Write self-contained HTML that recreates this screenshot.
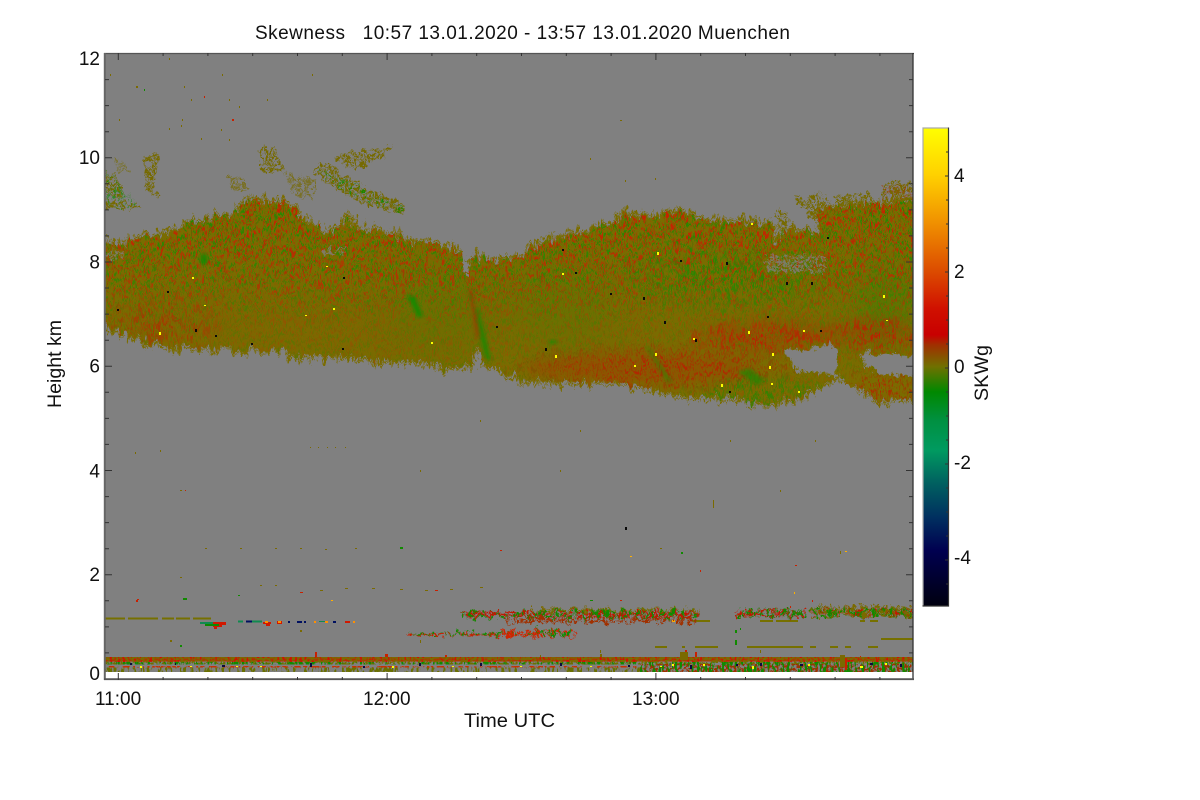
<!DOCTYPE html>
<html><head><meta charset="utf-8"><title>Skewness</title>
<style>html,body{margin:0;padding:0;background:#fff;width:1200px;height:800px;overflow:hidden}svg{display:block}text{font-family:"Liberation Sans",sans-serif;fill:#111;font-size:19px}</style></head>
<body>
<svg width="1200" height="800" viewBox="0 0 1200 800" xmlns="http://www.w3.org/2000/svg">
<defs>
<path id="cp" d="M95,238 L112,243 125,244 132,240 142,236 172,236 178,228 192,222 203,223 217,216 232,214 243,205 250,198 268,202 283,203 292,212 303,220 327,233 338,228 347,218 355,224 377,232 398,236 413,243 430,243 450,248 460,252 463,262 464,275 470,258 478,256 490,262 505,258 520,258 535,245 548,240 565,238 580,232 598,226 615,224 625,214 650,218 683,212 703,220 725,222 750,222 774,225 778,245 785,230 805,232 818,234 820,207 840,205 860,205 885,205 910,200 925,198 925,358 913,358 893,353 873,357 867,350 862,355 862,360 877,372 887,375 925,377 925,400 913,400 893,398 880,403 863,390 843,382 833,363 835,355 832,345 820,348 800,353 782,350 790,360 800,370 830,374 836,378 830,384 820,387 803,397 763,405 740,398 720,398 690,396 645,388 608,383 520,380 500,370 483,366 477,350 470,367 450,370 433,362 377,360 333,355 290,357 287,350 243,350 177,346 150,342 120,332 95,325 Z"/>
<clipPath id="plot"><rect x="105" y="54" width="808" height="618"/></clipPath>
<clipPath id="cloud"><use href="#cp"/></clipPath>
<filter id="jag" filterUnits="userSpaceOnUse" x="0" y="0" width="1200" height="800" color-interpolation-filters="sRGB">
<feTurbulence type="fractalNoise" baseFrequency="0.22 0.05" numOctaves="3" seed="7" result="t"/>
<feDisplacementMap in="SourceGraphic" in2="t" scale="18" xChannelSelector="R" yChannelSelector="G"/>
</filter>
<filter id="jag2" filterUnits="userSpaceOnUse" x="0" y="0" width="1200" height="800" color-interpolation-filters="sRGB">
<feTurbulence type="fractalNoise" baseFrequency="0.18 0.14" numOctaves="3" seed="17" result="t"/>
<feDisplacementMap in="SourceGraphic" in2="t" scale="12" xChannelSelector="R" yChannelSelector="G"/>
</filter>
<filter id="n1" filterUnits="userSpaceOnUse" x="0" y="0" width="1200" height="800" color-interpolation-filters="sRGB">
<feTurbulence type="fractalNoise" baseFrequency="0.5 0.22" numOctaves="2" seed="3"/>
<feColorMatrix values="0 0 0 0 0 0 0 0 0 0 0 0 0 0 0 9 0 0 0 -4.8" result="a"/>
<feComposite in="SourceGraphic" in2="a" operator="in"/>
</filter>
<filter id="n2" filterUnits="userSpaceOnUse" x="0" y="0" width="1200" height="800" color-interpolation-filters="sRGB">
<feTurbulence type="fractalNoise" baseFrequency="0.5 0.18" numOctaves="2" seed="21"/>
<feColorMatrix values="0 0 0 0 0 0 0 0 0 0 0 0 0 0 0 9 0 0 0 -4.9" result="a"/>
<feComposite in="SourceGraphic" in2="a" operator="in"/>
</filter>
<filter id="n3" filterUnits="userSpaceOnUse" x="0" y="0" width="1200" height="800" color-interpolation-filters="sRGB">
<feTurbulence type="fractalNoise" baseFrequency="0.38 0.38" numOctaves="3" seed="11"/>
<feColorMatrix values="0 0 0 0 0 0 0 0 0 0 0 0 0 0 0 14 0 0 0 -6.6" result="a"/>
<feComposite in="SourceGraphic" in2="a" operator="in"/>
</filter>
<filter id="n4" filterUnits="userSpaceOnUse" x="0" y="0" width="1200" height="800" color-interpolation-filters="sRGB">
<feTurbulence type="fractalNoise" baseFrequency="0.4 0.12" numOctaves="2" seed="31"/>
<feColorMatrix values="0 0 0 0 0 0 0 0 0 0 0 0 0 0 0 12 0 0 0 -6.2" result="a"/>
<feComposite in="SourceGraphic" in2="a" operator="in"/>
</filter>
<filter id="n5" filterUnits="userSpaceOnUse" x="0" y="0" width="1200" height="800" color-interpolation-filters="sRGB">
<feTurbulence type="fractalNoise" baseFrequency="0.4 0.3" numOctaves="2" seed="41"/>
<feColorMatrix values="0 0 0 0 0 0 0 0 0 0 0 0 0 0 0 12 0 0 0 -5.2" result="a"/>
<feComposite in="SourceGraphic" in2="a" operator="in"/>
</filter>
<filter id="b6" x="-50%" y="-50%" width="200%" height="200%"><feGaussianBlur stdDeviation="6"/></filter>
<filter id="b12" x="-50%" y="-50%" width="200%" height="200%"><feGaussianBlur stdDeviation="14"/></filter>
<filter id="b2" x="-50%" y="-50%" width="200%" height="200%"><feGaussianBlur stdDeviation="1.6"/></filter>
<linearGradient id="gG" gradientUnits="userSpaceOnUse" x1="0" y1="200" x2="0" y2="410">
<stop offset="0" stop-color="#1f8a00" stop-opacity=".95"/><stop offset=".35" stop-color="#1f8a00" stop-opacity=".7"/><stop offset=".6" stop-color="#2a8400" stop-opacity=".3"/><stop offset="1" stop-color="#2a8400" stop-opacity=".4"/>
</linearGradient>
<linearGradient id="gR" gradientUnits="userSpaceOnUse" x1="0" y1="200" x2="0" y2="410">
<stop offset="0" stop-color="#cc1c00" stop-opacity=".95"/><stop offset=".38" stop-color="#c42400" stop-opacity=".75"/><stop offset=".6" stop-color="#a84000" stop-opacity=".4"/><stop offset="1" stop-color="#a84000" stop-opacity=".35"/>
</linearGradient>
<radialGradient id="rr"><stop offset="0" stop-color="#c81400" stop-opacity=".85"/><stop offset=".6" stop-color="#c81400" stop-opacity=".55"/><stop offset="1" stop-color="#c81400" stop-opacity="0"/></radialGradient>
<radialGradient id="rg"><stop offset="0" stop-color="#1d8a00" stop-opacity=".8"/><stop offset=".6" stop-color="#1d8a00" stop-opacity=".5"/><stop offset="1" stop-color="#1d8a00" stop-opacity="0"/></radialGradient>
<linearGradient id="cb" x1="0" y1="0" x2="0" y2="1">
<stop offset="0" stop-color="#ffff00"/><stop offset=".10" stop-color="#ffd000"/><stop offset=".2" stop-color="#f09000"/><stop offset=".30" stop-color="#dc4c00"/><stop offset=".38" stop-color="#d01000"/><stop offset=".434" stop-color="#c80000"/><stop offset=".455" stop-color="#a03000"/><stop offset=".50" stop-color="#707000"/><stop offset=".553" stop-color="#008800"/><stop offset=".612" stop-color="#009040"/><stop offset=".675" stop-color="#009a60"/><stop offset=".744" stop-color="#006060"/><stop offset=".815" stop-color="#003060"/><stop offset=".885" stop-color="#000050"/><stop offset="1" stop-color="#000010"/>
</linearGradient>
</defs>
<rect width="1200" height="800" fill="#fff"/>
<g clip-path="url(#plot)">
<rect x="105" y="54" width="808" height="618" fill="#808080"/>
<!-- cirrus -->
<g filter="url(#jag2)">
<g filter="url(#n3)" fill="#766a00">
<path d="M100,166 L118,178 125,190 122,196 100,194 Z"/>
<path d="M100,199 L130,202 142,206 140,210 100,209 Z"/>
<path d="M143,156 L158,154 156,175 152,192 164,196 160,198 146,190 Z"/>
<path d="M112,158 L120,160 130,172 118,172 Z" opacity=".6"/>
<path d="M258,148 L275,147 284,172 262,172 Z"/>
<path d="M284,172 L316,180 314,198 296,197 Z" opacity=".7"/>
<path d="M226,176 L240,176 250,190 235,190 Z" opacity=".7"/>
<path d="M335,156 L362,150 392,146 385,156 368,162 358,170 345,167 Z"/>
<path d="M314,168 L325,161 347,176 372,190 404,204 402,214 375,208 345,196 325,182 Z"/>
<path d="M792,193 L815,205 825,222 815,222 800,205 Z"/>
<path d="M882,186 L895,180 913,182 913,210 882,210 Z"/>
<path d="M835,196 L870,192 882,210 835,210 Z"/>
<path d="M806,196 L812,210 830,205 822,192 Z"/>
<path d="M780,205 L790,220 786,228 776,215 Z"/>
</g>
<g filter="url(#n2)">
<path d="M105,168 L125,190 142,206 105,209 Z" fill="#158a00" opacity=".7"/>
<path d="M316,167 L402,206 400,213 345,194 Z" fill="#158a00"/>
<path d="M882,186 L913,182 913,210 882,210 Z" fill="#a83000" opacity=".6"/>
</g>
</g>
<!-- main cloud -->
<g filter="url(#jag)">
<use href="#cp" fill="none" stroke="#7a6c00" stroke-width="9" filter="url(#n3)"/>
<g clip-path="url(#cloud)">
<rect x="90" y="190" width="840" height="230" fill="#7a6c00"/>
<ellipse cx="300" cy="330" rx="170" ry="20" fill="#886000" opacity=".3" filter="url(#b12)"/>
<ellipse cx="560" cy="305" rx="50" ry="35" fill="#3f8000" opacity=".22" filter="url(#b12)"/>
<ellipse cx="885" cy="305" rx="28" ry="35" fill="#3f8000" opacity=".5" filter="url(#b12)"/>
<ellipse cx="440" cy="310" rx="50" ry="40" fill="#5f7600" opacity=".4" filter="url(#b12)"/>
<ellipse cx="640" cy="368" rx="115" ry="14" fill="#b02c00" opacity=".3" filter="url(#b6)"/>
<ellipse cx="770" cy="335" rx="70" ry="14" fill="#b02c00" opacity=".3" filter="url(#b6)"/>
<ellipse cx="875" cy="332" rx="40" ry="10" fill="#b02c00" opacity=".35" filter="url(#b6)"/>
<rect x="90" y="190" width="840" height="230" fill="url(#gG)" filter="url(#n1)"/>
<rect x="90" y="190" width="840" height="230" fill="url(#gR)" filter="url(#n2)"/>
<ellipse cx="660" cy="368" rx="160" ry="26" fill="url(#rr)" filter="url(#n1)"/>
<ellipse cx="760" cy="338" rx="90" ry="20" fill="url(#rr)" filter="url(#n4)"/>
<ellipse cx="875" cy="335" rx="55" ry="22" fill="url(#rr)" filter="url(#n4)"/>
<ellipse cx="880" cy="390" rx="50" ry="20" fill="url(#rr)" filter="url(#n1)"/>
<ellipse cx="760" cy="392" rx="75" ry="18" fill="url(#rg)" filter="url(#n4)"/>
<ellipse cx="730" cy="280" rx="120" ry="35" fill="url(#rg)" filter="url(#n4)"/>
<ellipse cx="160" cy="325" rx="70" ry="28" fill="url(#rr)" opacity=".65" filter="url(#n4)"/>
</g>
</g>
<!-- holes and notches restored on top of the cloud -->
<g filter="url(#jag2)" fill="#808080">
<path d="M783,349 L800,352 820,348 832,344 837,352 837,371 828,374 800,370 790,360Z"/>
<path d="M862,356 L868,350 873,357 893,353 920,358 920,376 887,375 877,372 862,360Z"/>
<path d="M462,248 L468,248 467,274 464,274Z"/>
<path d="M473,374 L477,351 481,374Z"/>
<path d="M838,380 L848,386 866,398 880,410 832,410 826,392Z"/>
</g>
<!-- gaps inside cloud -->
<g filter="url(#jag2)" opacity=".8"><g fill="#808080" filter="url(#n3)">
<rect x="767" y="255" width="58" height="17"/>
<rect x="105" y="252" width="18" height="6"/>
<rect x="322" y="248" width="22" height="6"/>
</g></g>
<!-- green patches -->
<g fill="#0f8c00">
<ellipse cx="204" cy="259" rx="4" ry="6" opacity=".8" filter="url(#b2)"/>
<path d="M407,296 L415,296 423,316 418,318 Z" opacity=".85" filter="url(#b2)"/>
<path d="M475,308 L478,308 488,345 491,360 486,360 481,342 Z" opacity=".7" filter="url(#b2)"/>
<path d="M645,346 L650,348 672,380 668,384 Z" opacity=".4" filter="url(#b2)"/>
<path d="M738,372 L750,368 764,380 758,386 Z" opacity=".6" filter="url(#b2)"/>
<ellipse cx="553" cy="342" rx="5" ry="2" opacity=".7" filter="url(#b2)"/>
</g>
<path d="M468,288 L472,288 480,335 476,340 Z" fill="#b02000" opacity=".4" filter="url(#b2)"/>
<!-- yellow specks -->
<path fill="#ffff00" d="M192,277h2v2h-2zM159,332h2v3h-2zM204,305h2v1h-2zM333,308h2v2h-2zM305,315h2v1h-2zM326,266h2v1h-2zM431,342h2v2h-2zM657,252h2v3h-2zM562,273h2v2h-2zM751,223h2v2h-2zM883,295h2v3h-2zM886,320h2v1h-2zM748,331h2v3h-2zM655,353h2v3h-2zM555,355h2v3h-2zM772,353h2v3h-2zM769,366h2v3h-2zM721,384h2v3h-2zM771,383h2v2h-2zM798,391h2v2h-2zM803,330h2v2h-2zM634,365h2v2h-2zM693,338h2v2h-2z"/>
<!-- black specks -->
<path fill="#0a0a0a" d="M343,277h2v2h-2zM195,329h2v3h-2zM167,291h2v2h-2zM215,335h2v2h-2zM251,343h2v2h-2zM342,348h2v2h-2zM117,309h2v2h-2zM496,326h2v2h-2zM562,249h2v2h-2zM680,260h2v2h-2zM726,262h2v3h-2zM575,272h2v2h-2zM610,293h2v2h-2zM643,297h2v3h-2zM664,321h2v3h-2zM695,339h2v3h-2zM545,348h2v3h-2zM786,282h2v3h-2zM811,282h2v3h-2zM827,237h2v2h-2zM820,330h2v2h-2zM767,316h2v2h-2zM729,391h2v2h-2zM625,527h2v3h-2z"/>
<!-- scattered specks in gray -->
<path fill="#7a6a00" d="M169,58h1v2h-1zM222,74h1v2h-1zM312,74h1v2h-1zM136,86h2v2h-2zM184,86h1v2h-1zM191,99h1v2h-1zM229,99h1v2h-1zM267,99h1v2h-1zM239,106h1v2h-1zM119,119h1v2h-1zM182,119h1v2h-1zM181,125h1v2h-1zM169,128h1v2h-1zM221,129h1v2h-1zM201,138h1v2h-1zM229,139h1v2h-1zM110,74h1v2h-1zM590,158h1v2h-1zM655,178h1v2h-1zM625,180h1v2h-1zM780,210h1v2h-1zM620,120h2v1h-2zM480,420h1v2h-1zM310,447h1v1h-1zM318,447h1v1h-1zM327,447h1v1h-1zM335,447h1v1h-1zM345,447h1v1h-1zM160,450h1v2h-1zM180,490h2v1h-2zM135,452h1v2h-1zM205,548h2v1h-2zM240,548h2v1h-2zM275,548h2v1h-2zM300,548h2v1h-2zM325,549h2v1h-2zM355,548h2v1h-2zM180,577h2v1h-2zM260,585h2v1h-2zM275,585h2v1h-2zM320,590h3v1h-3zM345,588h3v1h-3zM372,588h3v1h-3zM400,589h3v1h-3zM425,590h3v1h-3zM450,589h3v1h-3zM480,587h3v1h-3zM713,500h1v8h-1zM840,551h1v3h-1zM660,548h2v1h-2zM730,440h1v2h-1zM420,470h1v2h-1zM560,470h1v2h-1zM780,490h1v2h-1zM580,430h1v2h-1zM815,440h1v2h-1zM420,640h1v3h-1zM300,630h2v2h-2zM170,640h2v2h-2zM600,650h1v3h-1zM540,655h1v2h-1zM760,650h1v3h-1z"/>
<path fill="#c82000" d="M232,119h2v2h-2zM204,96h1v2h-1zM136,600h2v2h-2zM137,599h2v1h-2zM435,590h3v1h-3zM185,490h1v1h-1zM500,550h2v1h-2zM300,592h3v1h-3zM790,606h1v2h-1zM700,570h1v2h-1zM620,600h2v1h-2zM795,565h2v1h-2zM812,600h1v2h-1zM445,655h2v3h-2zM860,656h1v1h-1z"/>
<path fill="#108a00" d="M144,89h1v2h-1zM400,547h3v2h-3zM183,598h4v2h-4zM681,552h2v2h-2zM180,645h2v2h-2zM735,630h2v3h-2zM590,600h3v1h-3zM238,595h2v1h-2zM434,636h3v1h-3zM735,640h2v5h-2zM740,628h1v2h-1z"/>
<path fill="#ffb000" d="M794,592h1v2h-1zM331,600h2v1h-2zM845,551h2v1h-2zM630,556h2v1h-2zM672,620h3v2h-3zM638,609h2v2h-2z"/>
<!-- thin olive lines -->
<path fill="#767000" d="M105,617.5h20v2h-20zM128,617.5h30v2h-30zM162,617.5h12v2h-12zM176,617.5h14v2h-14zM193,617.5h18v2h-18zM693,620h17v2h-17zM760,620h13v2h-13zM776,620h22v2h-22zM860,620h5v2h-5zM870,620h8v2h-8zM655,646h12v2h-12zM682,646h3v2h-3zM695,646h23v2h-23zM747,646h56v2h-56zM810,646h6v2h-6zM830,646h8v2h-8zM845,646h6v2h-6zM868,646h10v2h-10zM881,638h32v2h-32z"/>
<!-- coloured mid level layers -->
<g filter="url(#jag2)">
<rect x="462" y="611" width="238" height="7" fill="#c01800" filter="url(#n5)"/>
<rect x="530" y="608" width="170" height="4" fill="#7a6a00" filter="url(#n3)"/>
<rect x="462" y="610" width="238" height="9" fill="#118a00" filter="url(#n4)"/>
<rect x="505" y="618" width="190" height="5" fill="#a03000" filter="url(#n3)"/>
<rect x="737" y="610" width="70" height="8" fill="#c01800" filter="url(#n3)"/>
<rect x="737" y="609" width="70" height="9" fill="#118a00" filter="url(#n4)"/>
<rect x="812" y="608" width="105" height="8" fill="#c01800" filter="url(#n5)"/>
<rect x="812" y="606" width="105" height="11" fill="#7a6a00" filter="url(#n3)"/>
<rect x="812" y="608" width="105" height="9" fill="#118a00" filter="url(#n4)"/>
<rect x="407" y="633" width="130" height="3" fill="#c82000" filter="url(#n3)"/>
<rect x="407" y="632" width="130" height="3" fill="#108a00" filter="url(#n4)"/>
<rect x="500" y="630" width="75" height="7" fill="#d02400" filter="url(#n3)"/>
<rect x="535" y="629" width="35" height="7" fill="#108a00" filter="url(#n4)"/>
</g>
<path fill="#108a50" d="M200,622h22v2h-22zM238,620.5h5v2h-5zM246,620.5h16v2h-16zM319,621h6v1h-6z"/>
<path fill="#d01800" d="M213,622h13v3h-13zM213,625h9v2h-9zM214,627h3v2h-3zM263,622h8v2h-8zM266,624h4v2h-4zM277,621h5v3h-5zM345,621h5v2h-5z"/>
<path fill="#0b8a00" d="M205,624h14v2h-14z"/>
<path fill="#001060" d="M246,620.5h6v2h-6zM297,621h5v2h-5zM304,621h2v2h-2zM288,621h2v2h-2zM333,621h3v2h-3z"/>
<path fill="#ff9000" d="M265,621h3v2h-3zM278,621h3v2h-3zM325,621h3v2h-3zM314,621h2v2h-2zM353,621h2v2h-2z"/>
<!-- ground bands -->
<rect x="105" y="657" width="808" height="1.5" fill="#7a6a00"/>
<rect x="105" y="658.5" width="808" height="3" fill="#aa3800"/>
<rect x="105" y="657" width="808" height="5" fill="#d01000" filter="url(#n4)"/>
<rect x="105" y="658" width="808" height="4" fill="#7a6a00" filter="url(#n3)"/>
<rect x="105" y="662" width="808" height="2.5" fill="#6d7000" filter="url(#n3)"/>
<rect x="105" y="662" width="808" height="2.5" fill="#108a00" filter="url(#n4)"/>
<rect x="105" y="666" width="808" height="1.5" fill="#c83000" filter="url(#n3)"/>
<rect x="105" y="667.5" width="808" height="4.5" fill="#6a7000" filter="url(#n4)"/>
<rect x="640" y="664" width="273" height="8" fill="#a03000" filter="url(#n3)"/>
<rect x="640" y="664" width="273" height="8" fill="#108a00" filter="url(#n4)"/>
<path fill="#0a0a40" d="M130,663h2v2h-2zM175,663h1v2h-1zM222,665h3v2h-3zM310,663h2v4h-2zM363,666h2v2h-2zM419,663h2v3h-2zM480,663h2v3h-2zM560,663h2v3h-2zM628,665h2v2h-2zM690,665h2v4h-2zM736,664h2v2h-2zM760,663h2v3h-2zM800,664h3v2h-3zM845,664h2v3h-2zM870,663h3v2h-3zM900,664h2v3h-2z"/>
<path fill="#ffff00" d="M140,666h2v2h-2zM190,666h2v1h-2zM236,666h2v1h-2zM260,666h2v1h-2zM392,666h2v2h-2zM452,666h2v1h-2zM520,666h2v1h-2zM590,666h2v1h-2zM660,666h2v1h-2zM703,664h2v2h-2zM752,666h2v3h-2zM808,664h2v2h-2zM860,666h3v2h-3zM885,663h2v2h-2zM672,664h2v2h-2z"/>
<path fill="#c82000" d="M315,652h2v5h-2zM685,650h2v7h-2zM680,654h2v3h-2zM385,654h3v3h-3zM845,658h2v12h-2zM695,652h2v5h-2z"/>
<path fill="#7a6a00" d="M840,655h5v12h-5zM680,652h8v8h-8zM600,654h2v3h-2z"/>
</g>
<!-- frame -->
<path d="M104,53.5H914" stroke="#555" stroke-width="1.2" fill="none"/>
<path d="M104.8,53V680" stroke="#666" stroke-width="2" fill="none"/>
<path d="M913,53V680" stroke="#333" stroke-width="1.3" fill="none"/>
<path d="M104,679.2h810" stroke="#555" stroke-width="1.8" fill="none"/>
<path stroke="#333" stroke-width="1" fill="none" d="M118.3,680v-7M387.1,680v-7M655.9,680v-7M163.1,680v-3M207.9,680v-3M252.7,680v-3M297.5,680v-3M342.3,680v-3M431.9,680v-3M476.7,680v-3M521.5,680v-3M566.3,680v-3M611.1,680v-3M700.7,680v-3M745.5,680v-3M790.3,680v-3M835.1,680v-3M879.9,680v-3
M118.3,53v7M387.1,53v7M655.9,53v7M163.1,53v3M207.9,53v3M252.7,53v3M297.5,53v3M342.3,53v3M431.9,53v3M476.7,53v3M521.5,53v3M566.3,53v3M611.1,53v3M700.7,53v3M745.5,53v3M790.3,53v3M835.1,53v3M879.9,53v3
M105,157.7h7M105,262h7M105,366.2h7M105,470.5h7M105,574.8h7M105,79.6h4M105,105.6h4M105,131.7h4M105,183.8h4M105,209.9h4M105,235.9h4M105,288h4M105,314.1h4M105,340.2h4M105,392.3h4M105,418.4h4M105,444.4h4M105,496.6h4M105,522.6h4M105,548.7h4M105,600.8h4M105,626.9h4M105,652.9h4
M913,157.7h-7M913,262h-7M913,366.2h-7M913,470.5h-7M913,574.8h-7M913,79.6h-4M913,105.6h-4M913,131.7h-4M913,183.8h-4M913,209.9h-4M913,235.9h-4M913,288h-4M913,314.1h-4M913,340.2h-4M913,392.3h-4M913,418.4h-4M913,444.4h-4M913,496.6h-4M913,522.6h-4M913,548.7h-4M913,600.8h-4M913,626.9h-4M913,652.9h-4"/>
<!-- colorbar -->
<rect x="922.5" y="127.5" width="26" height="478" fill="url(#cb)"/>
<path d="M923,606V128H948" fill="none" stroke="#aaa" stroke-width="1.2"/>
<path d="M948.5,127.5V606H922.5" fill="none" stroke="#333" stroke-width="1.2"/>
<path stroke="#333" stroke-width="1" fill="none" d="M948,152h-2M948,176h-3M948,200h-2M948,224h-2M948,248h-2M948,272h-3M948,296h-2M948,320h-2M948,344h-2M948,368h-3M948,392h-2M948,416h-2M948,440h-2M948,464h-3M948,488h-2M948,512h-2M948,536h-2M948,560h-3M948,584h-2"/>
<!-- text -->
<text x="255" y="39" textLength="535" lengthAdjust="spacing" xml:space="preserve" style="font-size:19px">Skewness   10:57 13.01.2020 - 13:57 13.01.2020 Muenchen</text>
<g text-anchor="end">
<text x="100" y="65">12</text><text x="100" y="164">10</text><text x="100" y="268.5">8</text><text x="100" y="372.5">6</text><text x="100" y="477.5">4</text><text x="100" y="581">2</text><text x="100" y="680">0</text>
</g>
<text x="95" y="705">11:00</text><text x="363" y="705">12:00</text><text x="632" y="705">13:00</text>
<text x="464" y="727" textLength="91" lengthAdjust="spacingAndGlyphs">Time UTC</text>
<text transform="translate(61,408) rotate(-90)" textLength="88" lengthAdjust="spacingAndGlyphs">Height km</text>
<text x="954" y="182">4</text><text x="954" y="278">2</text><text x="954" y="373">0</text><text x="954" y="469">-2</text><text x="954" y="564">-4</text>
<text transform="translate(988,401) rotate(-90)" textLength="56" lengthAdjust="spacingAndGlyphs">SKWg</text>
</svg>
</body></html>
